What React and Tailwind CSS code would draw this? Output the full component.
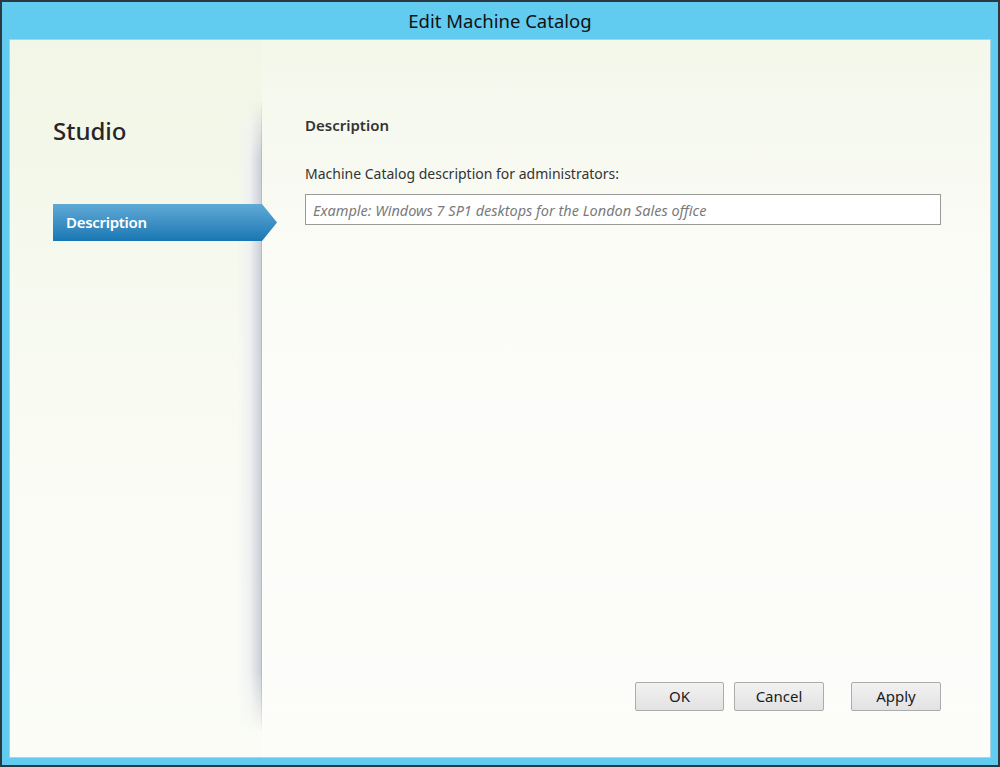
import React from "react";

const font = { fontFamily: '"Noto Sans", "Open Sans", sans-serif' };

function Btn({ children, className = "" }) {
  return (
    <button
      className={
        "h-[29px] rounded-[2px] border border-[#acacac] bg-gradient-to-b from-[#f2f2f2] to-[#e2e2e2] text-[15px] text-[#1a1a1a] " +
        className
      }
    >
      {children}
    </button>
  );
}

export default function App() {
  return (
    <div
      className="w-[1000px] h-[767px] bg-[#62cbf0] border-2 border-[#2b3a42] flex flex-col"
      style={font}
    >
      <div className="h-[37px] flex items-center justify-center text-[18.5px] text-[#111]">
        Edit Machine Catalog
      </div>
      <div className="flex-1 mx-[7px] mb-[7px] border border-[#a8d4e4] bg-gradient-to-b from-[#f1f6e6] via-[#f9fbf3] to-[#fbfcf7] flex">
        {/* Left pane */}
        <div className="w-[252px] relative">
          <div className="absolute right-0 top-[60px] bottom-[25px] w-[24px] bg-gradient-to-r from-transparent via-[#eef0f2] to-[#c9ccd3] [mask-image:linear-gradient(to_bottom,transparent,black_60px,black_calc(100%-60px),transparent)]" />
          <div className="absolute right-0 top-[60px] bottom-[25px] w-px bg-[#b8bbc2] [mask-image:linear-gradient(to_bottom,transparent,black_60px,black_calc(100%-60px),transparent)]" />
          <div className="pt-[74px] pl-[43px] text-[24px] font-medium text-[#262626] leading-[34px]">
            Studio
          </div>
          <div className="mt-[56px] ml-[43px] relative h-[37px] w-[224px]">
            <div
              className="absolute inset-0 bg-gradient-to-b from-[#5eaad6] to-[#1677b3] flex items-center pl-[13px] text-[15px] font-semibold text-white tracking-[-0.3px]"
              style={{ clipPath: "polygon(0 0, 209px 0, 224px 50%, 209px 100%, 0 100%)" }}
            >
              Description
            </div>
          </div>
        </div>
        {/* Right pane */}
        <div className="flex-1 flex flex-col pl-[43px] pr-[49px] bg-gradient-to-b from-[#ffffff]/20 via-[#ffffff]/60 to-[#ffffff]/40">
          <div className="pt-[74px] text-[15px] font-semibold text-[#333] leading-[22px]">
            Description
          </div>
          <div className="mt-[28px] text-[14px] text-[#333] leading-[20px]">
            Machine Catalog description for administrators:
          </div>
          <input
            className="mt-[10px] h-[31px] w-full border border-[#9a9a9a] bg-white px-[7px] text-[14.5px] italic outline-none placeholder:text-[#7a7a7a]"
            style={font}
            placeholder="Example: Windows 7 SP1 desktops for the London Sales office"
          />
          <div className="flex-1" />
          <div className="flex justify-end mb-[46px]">
            <Btn className="w-[89px]">OK</Btn>
            <Btn className="w-[90px] ml-[10px]">Cancel</Btn>
            <Btn className="w-[90px] ml-[27px]">Apply</Btn>
          </div>
        </div>
      </div>
    </div>
  );
}
